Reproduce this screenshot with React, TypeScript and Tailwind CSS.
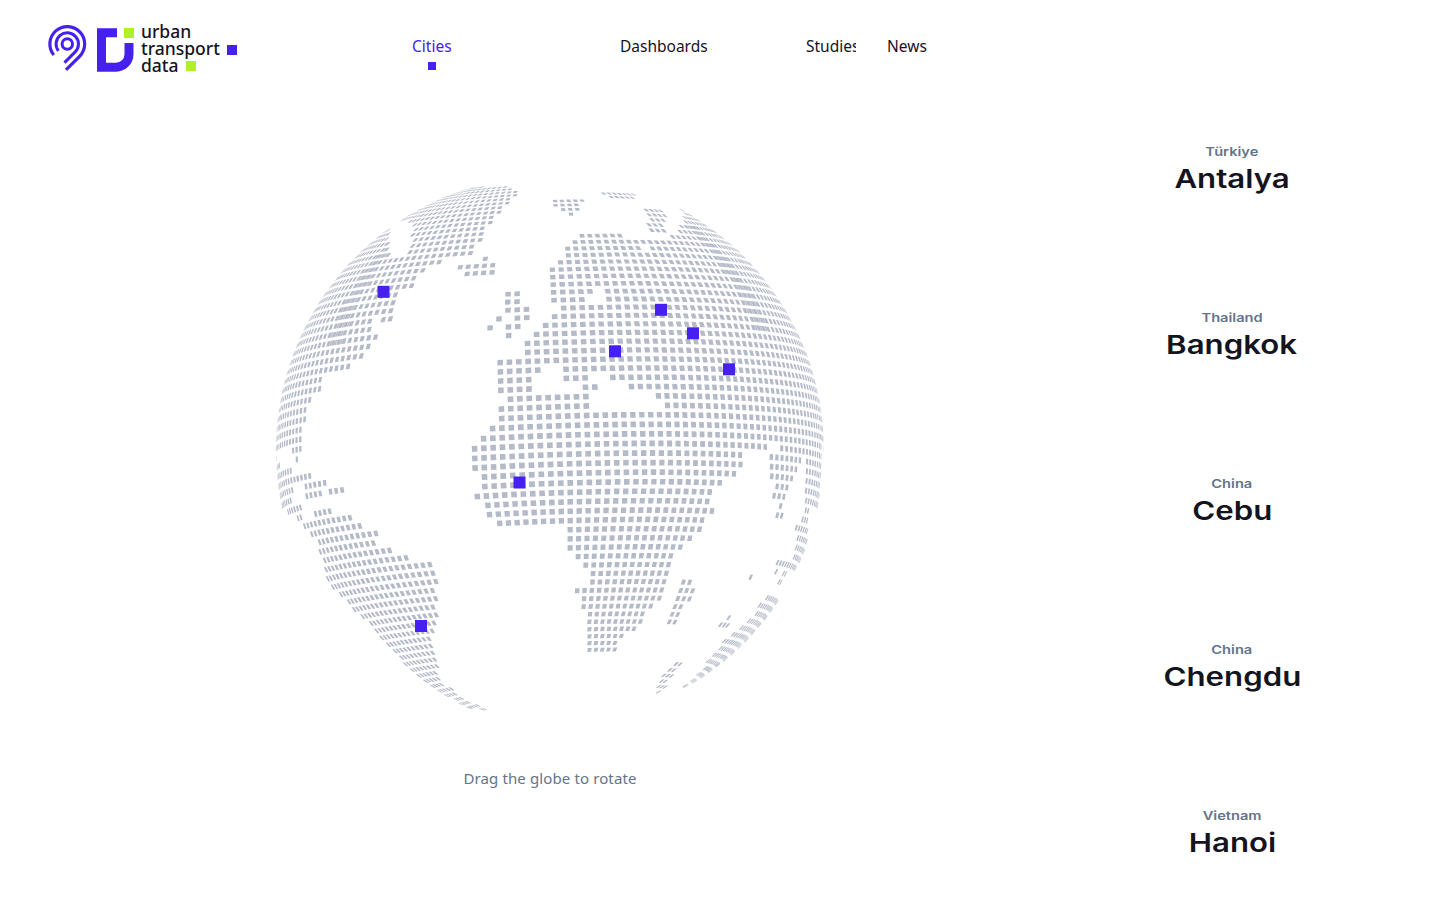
import { useMemo } from "react";

type Pt = number[];

const crop = (ox: number, oy: number, pts: number[][]): Pt[] =>
  pts.map(([x, y]) => [ox + x / 3, oy + y / 3]);

const land: Pt[][] = [
  // north america + greenland
  crop(270, 180, [[-60,812],[90,812],[98,780],[100,730],[112,695],[120,660],[150,630],[155,600],[222,570],[265,540],[290,510],[338,480],[308,455],[292,428],[360,425],[378,395],[383,355],[412,328],[442,305],[450,282],[497,258],[542,235],[605,222],[628,192],[640,165],[665,135],[685,110],[705,80],[750,38],[720,15],[600,0],[-60,0]]),
  // iceland, ireland, britain
  crop(270, 180, [[635,228],[660,228],[672,248],[668,288],[568,288],[572,250],[630,248]]),
  crop(270, 180, [[660,378],[680,378],[680,402],[702,402],[702,422],[680,422],[680,448],[660,448]]),
  crop(270, 180, [[712,330],[755,330],[755,374],[782,374],[782,420],[758,420],[758,446],[728,446],[728,470],[710,470],[710,428],[738,428],[738,400],[712,398]]),
  // eurasia + africa
  [[585,230],[608,230],[622,236],[645,242],[672,236],[682,222],[684,212],[670,203],[650,192],[900,192],[900,447],[743,447],[743,465],[737,473],[722,482],[713,492],[713,502],[712,511],[703,520],[702,530],[693,538],[683,547],[675,557],[673,565],[672,575],[668,583],[668,592],[665,600],[655,607],[647,615],[643,623],[635,630],[625,637],[618,644],[617,653],[586,653],[588,640],[583,632],[584,613],[577,607],[577,590],[587,583],[587,573],[578,570],[578,555],[568,552],[568,530],[548,528],[498,528],[487,518],[486,508],[477,499],[477,479],[474,470],[472,460],[472,449],[482,438],[491,428],[498,418],[498,408],[508,402],[508,394],[499,390],[499,358],[526,352],[526,341],[536,332],[546,322],[550,313],[559,310],[559,303],[548,300],[549,272],[555,264],[562,258],[566,244],[575,236]],
  [[612,391],[618,391],[618,398],[612,398]],
  // arctic islands
  crop(550, 180, [[5,55],[98,55],[100,92],[60,105],[45,105],[25,92],[5,70]]),
  crop(550, 180, [[158,40],[252,40],[245,62],[185,62],[182,50]]),
  crop(550, 180, [[288,90],[342,90],[348,130],[352,165],[305,165],[295,130]]),
  // caribbean and central america
  crop(270, 440, [[-60,-10],[90,-10],[90,28],[-60,28]]),
  crop(270, 440, [[72,35],[90,35],[90,85],[72,85]]),
  crop(270, 440, [[-60,55],[32,55],[32,88],[-60,88]]),
  crop(270, 440, [[-60,92],[120,92],[120,116],[75,118],[75,175],[60,185],[98,190],[100,240],[75,235],[-60,120]]),
  crop(270, 440, [[108,118],[165,118],[165,148],[152,172],[102,172],[108,150]]),
  crop(270, 440, [[170,145],[185,145],[185,165],[170,165]]),
  crop(270, 440, [[186,130],[218,130],[218,150],[204,150],[204,180],[190,180]]),
  crop(270, 440, [[136,205],[180,205],[180,226],[136,226]]),
  // south america
  crop(270, 440, [[85,232],[232,228],[280,255],[325,280],[330,325],[378,330],[425,352],[500,372],[505,412],[495,440],[503,465],[495,495],[515,520],[505,555],[500,585],[480,600],[495,650],[505,700],[520,730],[550,750],[580,775],[655,812],[595,805],[500,750],[420,690],[330,590],[270,525],[220,480],[180,435],[150,350],[140,300],[110,280]]),
  // east side
  crop(550, 440, [[402,418],[440,418],[425,462],[422,482],[392,505],[388,530],[372,552],[345,552],[355,510],[362,490],[375,465],[385,440]]),
  crop(550, 440, [[640,25],[825,25],[825,50],[755,55],[738,105],[720,135],[705,165],[702,195],[695,250],[678,250],[685,205],[670,165],[668,125],[658,95],[655,60]]),
  crop(550, 440, [[762,60],[815,60],[810,130],[805,205],[775,215],[772,295],[770,325],[760,345],[745,390],[730,385],[640,385],[640,368],[700,365],[735,345],[738,265],[750,235],[762,210],[765,150]]),
  crop(550, 440, [[600,400],[640,400],[640,412],[600,412]]),
  crop(550, 440, [[590,420],[600,420],[600,436],[590,436]]),
  crop(550, 440, [[645,420],[662,420],[662,436],[645,436]]),
  crop(550, 440, [[668,395],[682,395],[682,412],[668,412]]),
  crop(550, 440, [[698,395],[708,395],[708,408],[698,408]]),
  crop(550, 440, [[686,420],[696,420],[696,432],[686,432]]),
  crop(550, 440, [[674,345],[684,345],[684,362],[674,362]]),
  crop(550, 440, [[706,345],[716,345],[716,358],[706,358]]),
  crop(550, 440, [[655,468],[690,462],[680,500],[660,525],[645,548],[630,570],[600,592],[585,612],[565,632],[550,655],[530,678],[490,697],[465,712],[440,727],[415,742],[398,738],[420,722],[435,708],[455,690],[470,670],[480,650],[505,625],[520,605],[540,585],[565,565],[590,542],[615,518],[630,492]]),
  crop(550, 440, [[505,570],[515,545],[530,528],[543,530],[532,568]]),
  crop(550, 440, [[372,668],[392,672],[372,702],[358,715],[352,735],[330,758],[315,752],[325,722],[340,695]]),
];

const water: Pt[][] = [
  [[270,170],[830,170],[830,187],[270,187]],
  crop(270, 180, [[362,135],[395,120],[432,128],[425,172],[402,222],[382,226],[352,222],[358,180]]),
  crop(270, 180, [[308,402],[328,402],[328,422],[308,422]]),
  [[530,393],[530,384],[541,373],[551,362],[565,362],[563,381],[577,381],[577,393]],
  [[588,371],[606,371],[613,382],[642,390],[662,400],[662,409],[588,409],[588,394],[596,390],[596,380]],
  [[596,286],[607,286],[602,302],[588,302],[590,292]],
  [[640,244],[646,244],[646,250],[640,250]],
];

const inside = (x: number, y: number, poly: Pt[]) => {
  let hit = false;
  for (let i = 0, j = poly.length - 1; i < poly.length; j = i++) {
    const [xi, yi] = poly[i];
    const [xj, yj] = poly[j];
    if (yi > y !== yj > y && x < ((xj - xi) * (y - yi)) / (yj - yi) + xi) hit = !hit;
  }
  return hit;
};

const isLand = (x: number, y: number) =>
  land.some((p) => inside(x, y, p)) && !water.some((p) => inside(x, y, p));

const CX = 550;
const CY = 450;
const R = 274;
const TILT = (-5 * Math.PI) / 180;
const ROLL = (2 * Math.PI) / 180;
const STEP = 0.035;
const DEG = Math.PI / 180;

const project = (e: number, a: number) => {
  const x = Math.cos(e) * Math.sin(a);
  const y = Math.sin(e);
  const z = Math.cos(e) * Math.cos(a);
  const y1 = y * Math.cos(TILT) - z * Math.sin(TILT);
  const z1 = y * Math.sin(TILT) + z * Math.cos(TILT);
  const x2 = x * Math.cos(ROLL) - y1 * Math.sin(ROLL);
  const y2 = x * Math.sin(ROLL) + y1 * Math.cos(ROLL);
  return { x: CX + R * x2, y: CY - R * y2, z: z1 };
};

// horizontal dot pitch relative to the middle row
const pitch = (e: number) => {
  const d = e / DEG;
  const table = [[-90, 0.6], [-44, 0.7], [-12, 1], [28, 0.97], [50, 0.8], [75, 0.6], [90, 0.5]];
  for (let i = 1; i < table.length; i++) {
    if (d <= table[i][0]) {
      const t = (d - table[i - 1][0]) / (table[i][0] - table[i - 1][0]);
      return table[i - 1][1] + t * (table[i][1] - table[i - 1][1]);
    }
  }
  return 0.5;
};

const buildDots = () => {
  let d = "";
  const put = (e: number, a: number, de: number, da: number) => {
    const c = project(e, a);
    if (c.z < 0.02 || !isLand(c.x, c.y)) return;
    const q = [project(e - de, a - da), project(e - de, a + da), project(e + de, a + da), project(e + de, a - da)];
    d += "M" + q.map((p) => p.x.toFixed(1) + " " + p.y.toFixed(1)).join("L") + "Z";
  };
  for (let k = -44; k <= 44; k++) {
    const e = k * STEP;
    const step = Math.min((STEP * pitch(e)) / Math.cos(e), 0.6);
    const n = Math.ceil(Math.PI / 2 / step) + 2;
    for (let i = -n; i <= n; i++) {
      const a = i * step;
      put(e, a, STEP * 0.3, step * 0.3);
      // the seams: extra columns squeezed in along two meridians
      const deg = Math.abs(a) / DEG;
      if (e / DEG > 22 && e / DEG < 52 && deg > 54 && deg < 60) {
        put(e, a + step / 2, STEP * 0.3, step * 0.14);
      }
    }
  }
  return d;
};

const markers = [
  [383.5, 291.8],
  [661, 309.8],
  [693, 333.3],
  [615, 351.3],
  [729, 369.3],
  [519.5, 482.5],
  [421, 626],
];

const cities = [
  { country: "Türkiye", name: "Antalya" },
  { country: "Thailand", name: "Bangkok" },
  { country: "China", name: "Cebu" },
  { country: "China", name: "Chengdu" },
  { country: "Vietnam", name: "Hanoi" },
];

function Logo() {
  return (
    <div className="relative flex items-start">
      <svg width="90" height="50" viewBox="48 24 90 50" className="shrink-0" fill="none">
        <circle cx="67.3" cy="44" r="5.2" stroke="#4520f0" strokeWidth="3" />
        <path d="M58.4 50.8A11.2 11.2 0 1 1 75.2 51.9L64.5 62.6" stroke="#4520f0" strokeWidth="3" />
        <path d="M53.8 55A17.4 17.4 0 1 1 79.6 56.3L66 69.9" stroke="#4520f0" strokeWidth="3.2" />
        <path d="M97 28.3H117V37.3H106V62.7H116A8.5 8.5 0 0 0 124.5 54.2V43H133.5V54.2A17.5 17.5 0 0 1 116 71.7H97Z" fill="#4520f0" />
        <rect x="124" y="28" width="10" height="10" fill="#aef127" />
      </svg>
      <div className="ml-[3px] mt-[-1px] text-[17.5px] leading-[17px] font-medium text-[#14141f] [font-family:'Noto_Sans',sans-serif]">
        <div>urban</div>
        <div>transport</div>
        <div>data</div>
      </div>
      <span className="absolute left-[179px] top-[21px] size-[10px] bg-[#4520f0]" />
      <span className="absolute left-[138px] top-[37px] size-[10px] bg-[#aef127]" />
    </div>
  );
}

export default function App() {
  const dots = useMemo(buildDots, []);
  return (
    <div className="h-screen overflow-hidden bg-white [font-family:'Noto_Sans',sans-serif]">
      <header className="flex h-[92px] pl-[48px] pt-[24px]">
        <div className="w-[364px]">
          <Logo />
        </div>
        <nav className="flex pt-[10px] text-[15.5px] leading-[24px] text-[#14141f]">
          <a href="#" className="w-[208px]">
            <span className="inline-flex flex-col items-center text-[#4520f0]">
              Cities
              <span className="mt-[4px] size-[8px] bg-[#4520f0]" />
            </span>
          </a>
          <a href="#" className="w-[186px]">Dashboards</a>
          <a href="#" className="mr-[31px] w-[50px] overflow-hidden whitespace-nowrap">Studies</a>
          <a href="#">News</a>
        </nav>
      </header>
      <main className="flex">
        <section className="flex w-[1100px] flex-col items-center pt-[78px]">
          <svg width="560" height="560" viewBox="270 170 560 560">
            <path d={dots} fill="#b4bac7" />
            {markers.map(([x, y]) => (
              <rect key={x} x={x - 6} y={y - 6} width="12" height="12" fill="#4520f0" />
            ))}
          </svg>
          <p className="mt-[36px] text-[15px] leading-[24px] tracking-[0.12px] text-[#64748b]">
            Drag the globe to rotate
          </p>
        </section>
        <ul className="mt-[-5px] w-[264px] shrink-0">
          {cities.map((c) => (
            <li key={c.name} className="flex h-[166px] flex-col items-center justify-center text-center">
              <span className="scale-x-[1.22] text-[12px] leading-[16px] font-semibold text-[#64748b] [font-family:Inter,sans-serif]">
                {c.country}
              </span>
              <span className="mt-[2px] scale-x-[1.2] text-[26px] leading-[34px] font-semibold text-[#14141f] [font-family:Inter,sans-serif]">
                {c.name}
              </span>
            </li>
          ))}
        </ul>
      </main>
    </div>
  );
}
